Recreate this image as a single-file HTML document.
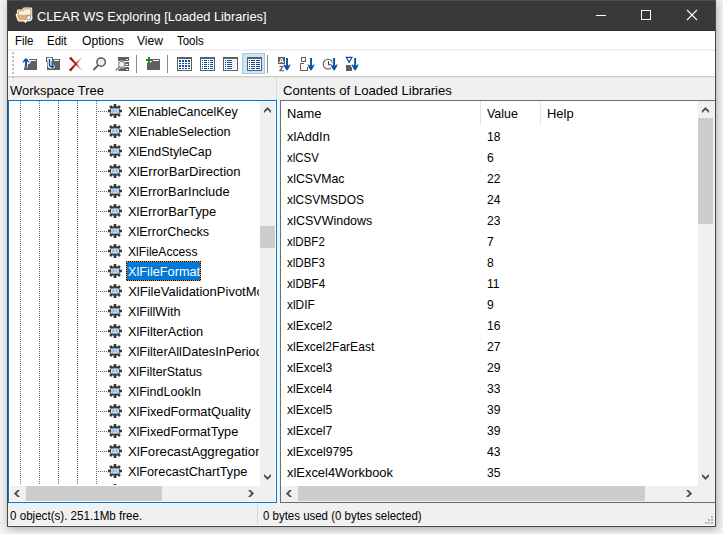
<!DOCTYPE html>
<html><head><meta charset="utf-8"><title>CLEAR WS Exploring [Loaded Libraries]</title>
<style>
html,body{margin:0;padding:0}
body{width:723px;height:534px;position:relative;overflow:hidden;background:#f2f2f2;font-family:'Liberation Sans',sans-serif;font-size:13px}
.t{position:absolute;white-space:pre;transform-origin:0 50%;font-family:'Liberation Sans',sans-serif;font-size:13px}
</style></head><body>
<div style="position:absolute;left:7px;top:0px;width:707px;height:525px;border:1px solid #474747;background:#f0f0f0;box-shadow:1px 2px 8px 0 rgba(0,0,0,.29)"></div>
<div style="position:absolute;left:8px;top:0px;width:707px;height:1px;background:#4d4d4d"></div>
<div style="position:absolute;left:8px;top:1px;width:707px;height:30px;background:#393939"></div>
<div style="position:absolute;left:8px;top:30px;width:707px;height:1px;background:#303030"></div>
<svg style="position:absolute;left:14px;top:6px" width="20" height="18" viewBox="0 0 20 18" >
<g stroke="#fff" stroke-width="2.6" stroke-linejoin="round" fill="#fff">
<path d="M4.2,4.8 H9 L10,2.9 H16.9 V9.5 H4.2 Z"/><path d="M3,8.9 H13 L12,14.2 H4.8 Z"/><circle cx="14.7" cy="11.6" r="2.5"/><path d="M12.9,13.8 L10.6,16.2" stroke-width="2.4"/>
</g>
<path d="M4.2,4.8 H9 L10,2.9 H16.9 V9.5 H4.2 Z" fill="#f0f0f5" stroke="#dcb067" stroke-width="1.3" stroke-linejoin="round"/>
<path d="M3,8.9 H13.4 L12.4,14.3 H4.7 Z" fill="#dcb067"/>
<path d="M13,13.6 L10.6,16.2" stroke="#e8e8e8" stroke-width="1.3"/>
<circle cx="14.7" cy="11.6" r="2.1" fill="#fff" stroke="#8c8c8c" stroke-width="1"/>
</svg>
<div class="t" style="left:37.2px;top:7px;line-height:20px;height:20px;color:#fff;transform:scaleX(0.9833);">CLEAR WS Exploring [Loaded Libraries]</div>
<svg style="position:absolute;left:590px;top:5px" width="115" height="20" viewBox="0 0 115 20" >
<g stroke="#fff" stroke-width="1" fill="none">
<path d="M6,10.5 H16" shape-rendering="crispEdges"/>
<rect x="51.5" y="5.5" width="9" height="9" shape-rendering="crispEdges"/>
<path d="M97,5 L107,15 M107,5 L97,15" stroke-width="1.1"/>
</g></svg>
<div style="position:absolute;left:8px;top:31px;width:707px;height:18px;background:#fff"></div>
<div class="t" style="left:15px;top:31px;line-height:20px;height:20px;color:#000;transform:scaleX(0.8829);">File</div>
<div class="t" style="left:47px;top:31px;line-height:20px;height:20px;color:#000;transform:scaleX(0.8837);">Edit</div>
<div class="t" style="left:81.5px;top:31px;line-height:20px;height:20px;color:#000;transform:scaleX(0.9350);">Options</div>
<div class="t" style="left:137px;top:31px;line-height:20px;height:20px;color:#000;transform:scaleX(0.9266);">View</div>
<div class="t" style="left:176.5px;top:31px;line-height:20px;height:20px;color:#000;transform:scaleX(0.8828);">Tools</div>
<div style="position:absolute;left:8px;top:49px;width:707px;height:2px;background:#f0f0f0"></div>
<div style="position:absolute;left:8px;top:51px;width:707px;height:25px;background:#fff"></div>
<div style="position:absolute;left:8px;top:76px;width:707px;height:1px;background:#cdcdcd"></div>
<div style="position:absolute;left:8px;top:77px;width:707px;height:1px;background:#e2e2e2"></div>
<svg style="position:absolute;left:12px;top:52px" width="2" height="26" viewBox="0 0 2 26" shape-rendering="crispEdges"><rect x="0" y="0" width="2" height="2" fill="#c9c9c9"/><rect x="1" y="1" width="1" height="1" fill="#a8a8a8"/><rect x="0" y="4" width="2" height="2" fill="#c9c9c9"/><rect x="1" y="5" width="1" height="1" fill="#a8a8a8"/><rect x="0" y="8" width="2" height="2" fill="#c9c9c9"/><rect x="1" y="9" width="1" height="1" fill="#a8a8a8"/><rect x="0" y="12" width="2" height="2" fill="#c9c9c9"/><rect x="1" y="13" width="1" height="1" fill="#a8a8a8"/><rect x="0" y="16" width="2" height="2" fill="#c9c9c9"/><rect x="1" y="17" width="1" height="1" fill="#a8a8a8"/><rect x="0" y="20" width="2" height="2" fill="#c9c9c9"/><rect x="1" y="21" width="1" height="1" fill="#a8a8a8"/><rect x="0" y="24" width="2" height="2" fill="#c9c9c9"/><rect x="1" y="25" width="1" height="1" fill="#a8a8a8"/></svg>
<svg style="position:absolute;left:0;top:0" width="723" height="534" viewBox="0 0 723 534">
<rect x="136" y="55" width="1" height="18" fill="#8a8a8a" shape-rendering="crispEdges"/>
<rect x="167" y="55" width="1" height="18" fill="#8a8a8a" shape-rendering="crispEdges"/>
<rect x="267" y="55" width="1" height="18" fill="#8a8a8a" shape-rendering="crispEdges"/>
<rect x="242.5" y="53.5" width="22" height="20" fill="#cce4f7" stroke="#99c9ef" stroke-width="1" shape-rendering="crispEdges"/>
<g shape-rendering="crispEdges"><rect x="24" y="59" width="13" height="11" fill="#5f5f5f"/><rect x="30" y="60" width="6" height="1" fill="#fff"/></g>
<path d="M26,66.4 V60 M23.2,62 Q24.5,60 26,58.6 Q27.5,60 28.8,62" fill="none" stroke="#fff" stroke-width="3.6" stroke-linejoin="round" stroke-linecap="round"/>
<path d="M26,67.8 V60" stroke="#0a50a0" stroke-width="1.9" fill="none"/>
<path d="M22.7,63.2 C22.7,60.6 24.5,59.4 26,57.9 C27.5,59.4 29.3,60.6 29.3,63.2 C28.5,62.2 27.7,61.7 26.9,61.5 L25.1,61.5 C24.3,61.7 23.5,62.2 22.7,63.2 Z" fill="#0a50a0"/>
<g shape-rendering="crispEdges"><rect x="47" y="59" width="13" height="11" fill="#5f5f5f"/><rect x="54" y="60" width="5" height="1" fill="#fff"/><rect x="46.5" y="57.5" width="6" height="4" fill="#fff" stroke="#5f5f5f" stroke-width="1"/></g>
<path d="M49.5,59.5 V65 Q49.5,66.6 51,66.6 H53" fill="none" stroke="#fff" stroke-width="3.8" stroke-linecap="round" stroke-linejoin="round"/>
<path d="M49.5,59 V65 Q49.5,66.6 51,66.6 H52.4" fill="none" stroke="#0a50a0" stroke-width="1.5"/><path d="M51.6,64.1 L54.6,66.6 L51.6,69.1 Z" fill="#0a50a0"/>
<defs><linearGradient id="rx" x1="69" x2="83" y1="0" y2="0" gradientUnits="userSpaceOnUse"><stop offset="0" stop-color="#a51c00"/><stop offset=".5" stop-color="#a51c00"/><stop offset="1" stop-color="#a51c00" stop-opacity=".1"/></linearGradient></defs>
<path d="M69,58.5 L71,56.8 L82.4,70.4 L82.1,70.7 Z" fill="url(#rx)"/><path d="M68.9,69.8 L70.9,71.5 L82.2,57.3 L81.9,57 Z" fill="url(#rx)"/>
<circle cx="101.1" cy="62.1" r="4.2" fill="#f0f0f4" stroke="#5c5c5c" stroke-width="1.5"/><path d="M98,65.4 L93.4,70" stroke="#5c5c5c" stroke-width="1.9"/>
<g shape-rendering="crispEdges" fill="#5f5f5f"><rect x="118" y="57" width="11" height="4"/><rect x="118" y="62" width="11" height="4"/><rect x="118" y="67" width="11" height="4"/><g fill="#fff"><rect x="126" y="59" width="2" height="1"/><rect x="126" y="64" width="2" height="1"/><rect x="126" y="69" width="2" height="1"/></g></g>
<path d="M119.4,66.8 L115.6,70.6" stroke="#fff" stroke-width="3"/><circle cx="121.6" cy="64.4" r="3.9" fill="#fff"/><circle cx="121.6" cy="64.4" r="3.1" fill="#f2f2f4" stroke="#6a6a6a" stroke-width="1"/><path d="M119.5,66.7 L115.8,70.4" stroke="#6a6a6a" stroke-width="1.3"/>
<g shape-rendering="crispEdges"><rect x="147" y="59" width="13" height="11" fill="#5f5f5f"/><rect x="153" y="60" width="6" height="1" fill="#fff"/></g>
<path d="M149,57 V63 M146,60 H152" stroke="#fff" stroke-width="3.6" />
<path d="M149,57 V63 M146,60 H152" stroke="#1e8c1e" stroke-width="1.8" shape-rendering="crispEdges"/>
<g shape-rendering="crispEdges"><rect x="177" y="57" width="15" height="14" fill="#5f5f5f"/><rect x="178" y="59" width="13" height="11" fill="#fff"/><rect x="179" y="60" width="2" height="2" fill="#0a4a9f"/><rect x="179" y="63" width="2" height="1" fill="#0a4a9f"/><rect x="179" y="65" width="2" height="2" fill="#0a4a9f"/><rect x="179" y="68" width="2" height="1" fill="#0a4a9f"/><rect x="182" y="60" width="2" height="2" fill="#0a4a9f"/><rect x="182" y="63" width="2" height="1" fill="#0a4a9f"/><rect x="182" y="65" width="2" height="2" fill="#0a4a9f"/><rect x="182" y="68" width="2" height="1" fill="#0a4a9f"/><rect x="185" y="60" width="2" height="2" fill="#0a4a9f"/><rect x="185" y="63" width="2" height="1" fill="#0a4a9f"/><rect x="185" y="65" width="2" height="2" fill="#0a4a9f"/><rect x="185" y="68" width="2" height="1" fill="#0a4a9f"/><rect x="188" y="60" width="2" height="2" fill="#0a4a9f"/><rect x="188" y="63" width="2" height="1" fill="#0a4a9f"/><rect x="188" y="65" width="2" height="2" fill="#0a4a9f"/><rect x="188" y="68" width="2" height="1" fill="#0a4a9f"/><rect x="200" y="57" width="15" height="14" fill="#5f5f5f"/><rect x="201" y="59" width="13" height="11" fill="#fff"/><rect x="202" y="60" width="1" height="1" fill="#0a4a9f"/><rect x="204" y="60" width="3" height="1" fill="#0a4a9f"/><rect x="208" y="60" width="1" height="1" fill="#0a4a9f"/><rect x="210" y="60" width="3" height="1" fill="#0a4a9f"/><rect x="202" y="62" width="1" height="1" fill="#0a4a9f"/><rect x="204" y="62" width="3" height="1" fill="#0a4a9f"/><rect x="208" y="62" width="1" height="1" fill="#0a4a9f"/><rect x="210" y="62" width="3" height="1" fill="#0a4a9f"/><rect x="202" y="64" width="1" height="1" fill="#0a4a9f"/><rect x="204" y="64" width="3" height="1" fill="#0a4a9f"/><rect x="208" y="64" width="1" height="1" fill="#0a4a9f"/><rect x="210" y="64" width="3" height="1" fill="#0a4a9f"/><rect x="202" y="66" width="1" height="1" fill="#0a4a9f"/><rect x="204" y="66" width="3" height="1" fill="#0a4a9f"/><rect x="208" y="66" width="1" height="1" fill="#0a4a9f"/><rect x="210" y="66" width="3" height="1" fill="#0a4a9f"/><rect x="202" y="68" width="1" height="1" fill="#0a4a9f"/><rect x="204" y="68" width="3" height="1" fill="#0a4a9f"/><rect x="208" y="68" width="1" height="1" fill="#0a4a9f"/><rect x="210" y="68" width="3" height="1" fill="#0a4a9f"/><rect x="223" y="57" width="15" height="14" fill="#5f5f5f"/><rect x="224" y="59" width="13" height="11" fill="#fff"/><rect x="232" y="60" width="4" height="9" fill="#f0f0f0"/><rect x="225" y="60" width="1" height="1" fill="#0a4a9f"/><rect x="227" y="60" width="5" height="1" fill="#0a4a9f"/><rect x="225" y="62" width="1" height="1" fill="#0a4a9f"/><rect x="227" y="62" width="5" height="1" fill="#0a4a9f"/><rect x="225" y="64" width="1" height="1" fill="#0a4a9f"/><rect x="227" y="64" width="5" height="1" fill="#0a4a9f"/><rect x="225" y="66" width="1" height="1" fill="#0a4a9f"/><rect x="227" y="66" width="5" height="1" fill="#0a4a9f"/><rect x="225" y="68" width="1" height="1" fill="#0a4a9f"/><rect x="227" y="68" width="5" height="1" fill="#0a4a9f"/><rect x="247" y="57" width="15" height="14" fill="#5f5f5f"/><rect x="248" y="59" width="13" height="11" fill="#fff"/><rect x="249" y="60" width="1" height="1" fill="#0a4a9f"/><rect x="251" y="60" width="4" height="1" fill="#0a4a9f"/><rect x="256" y="60" width="4" height="1" fill="#0a4a9f"/><rect x="249" y="62" width="1" height="1" fill="#0a4a9f"/><rect x="251" y="62" width="4" height="1" fill="#0a4a9f"/><rect x="256" y="62" width="4" height="1" fill="#0a4a9f"/><rect x="249" y="64" width="1" height="1" fill="#0a4a9f"/><rect x="251" y="64" width="4" height="1" fill="#0a4a9f"/><rect x="256" y="64" width="4" height="1" fill="#0a4a9f"/><rect x="249" y="66" width="1" height="1" fill="#0a4a9f"/><rect x="251" y="66" width="4" height="1" fill="#0a4a9f"/><rect x="256" y="66" width="4" height="1" fill="#0a4a9f"/><rect x="249" y="68" width="1" height="1" fill="#0a4a9f"/><rect x="251" y="68" width="4" height="1" fill="#0a4a9f"/><rect x="256" y="68" width="4" height="1" fill="#0a4a9f"/></g>
<rect x="278" y="57" width="7" height="7" fill="#5f5f5f" shape-rendering="crispEdges"/>
<path d="M287,58 V68" stroke="#0a50a0" stroke-width="1.9" fill="none"/><path d="M283.6,63.8 C283.6,66.6 285.5,68.8 287,70.7 C288.5,68.8 290.4,66.6 290.4,63.8 C289.6,64.9 288.8,65.5 287.9,65.7 L286.1,65.7 C285.2,65.5 284.4,64.9 283.6,63.8 Z" fill="#0a50a0"/>
<g shape-rendering="crispEdges" fill="none" stroke="#5f5f5f" stroke-width="1"><rect x="301.5" y="57.5" width="4" height="4"/><path d="M304,63.5 H300.5 V70.5 H307.5 V67"/></g>
<path d="M311,58 V68" stroke="#0a50a0" stroke-width="1.9" fill="none"/><path d="M307.6,63.8 C307.6,66.6 309.5,68.8 311,70.7 C312.5,68.8 314.4,66.6 314.4,63.8 C313.6,64.9 312.8,65.5 311.9,65.7 L310.1,65.7 C309.2,65.5 308.4,64.9 307.6,63.8 Z" fill="#0a50a0"/>
<circle cx="328.1" cy="64.2" r="4.9" fill="#f4f4f4" stroke="#5c5c5c" stroke-width="1.1"/><path d="M328.5,61.3 V64.7 H330.6" fill="none" stroke="#333" stroke-width="1"/>
<path d="M334.1,58 V68 M331,65 L334.1,70 L337.2,65" fill="none" stroke="#fff" stroke-width="3.4" stroke-linejoin="round"/>
<path d="M334.1,58 V68" stroke="#0a50a0" stroke-width="1.9" fill="none"/><path d="M330.70000000000005,63.8 C330.70000000000005,66.6 332.6,68.8 334.1,70.7 C335.6,68.8 337.5,66.6 337.5,63.8 C336.70000000000005,64.9 335.90000000000003,65.5 335.0,65.7 L333.20000000000005,65.7 C332.3,65.5 331.5,64.9 330.70000000000005,63.8 Z" fill="#0a50a0"/>
<path d="M346.3,57.4 H352 L349.15,62.4 Z" fill="#fff" stroke="#0a4a9f" stroke-width="1.2"/><rect x="346" y="65" width="6" height="6" fill="#5f5f5f" shape-rendering="crispEdges"/>
<path d="M355.1,62 V68 M352,65 L355.1,70 L358.2,65" fill="none" stroke="#fff" stroke-width="3.2" stroke-linejoin="round"/>
<path d="M355.1,58 V68" stroke="#0a50a0" stroke-width="1.9" fill="none"/><path d="M351.70000000000005,63.8 C351.70000000000005,66.6 353.6,68.8 355.1,70.7 C356.6,68.8 358.5,66.6 358.5,63.8 C357.70000000000005,64.9 356.90000000000003,65.5 356.0,65.7 L354.20000000000005,65.7 C353.3,65.5 352.5,64.9 351.70000000000005,63.8 Z" fill="#0a50a0"/>
</svg>
<svg style="position:absolute;left:276px;top:55px;will-change:transform" width="12" height="18" viewBox="276 55 12 18"><text x="281.5" y="63" font-family="Liberation Sans,sans-serif" font-size="7" font-weight="bold" fill="#fff" text-anchor="middle">A</text><text x="281.6" y="70.8" font-family="Liberation Sans,sans-serif" font-size="7.4" font-weight="bold" fill="#5f5f5f" stroke="#5f5f5f" stroke-width=".3" text-anchor="middle">Z</text></svg>
<div style="position:absolute;left:276px;top:78px;width:1px;height:22px;background:#dadada"></div>
<div class="t" style="left:10px;top:81px;line-height:20px;height:20px;color:#000;transform:scaleX(0.9945);">Workspace Tree</div>
<div class="t" style="left:283px;top:81px;line-height:20px;height:20px;color:#000;transform:scaleX(1.0117);">Contents of Loaded Libraries</div>
<div style="position:absolute;left:8px;top:100px;width:267px;height:401px;border:1px solid #0078d7;background:#fff"></div>
<div style="position:absolute;left:9px;top:101px;width:250px;height:384px;overflow:hidden;background:#fff"><svg style="position:absolute;left:0;top:0" width="251" height="384" shape-rendering="crispEdges"><line x1="11.5" y1="0" x2="11.5" y2="384" stroke="#666" stroke-width="1" stroke-dasharray="1 1" stroke-dashoffset="0"/><line x1="30.5" y1="0" x2="30.5" y2="384" stroke="#666" stroke-width="1" stroke-dasharray="1 1" stroke-dashoffset="0"/><line x1="49.5" y1="0" x2="49.5" y2="384" stroke="#666" stroke-width="1" stroke-dasharray="1 1" stroke-dashoffset="0"/><line x1="68.5" y1="0" x2="68.5" y2="384" stroke="#666" stroke-width="1" stroke-dasharray="1 1" stroke-dashoffset="0"/><line x1="87.5" y1="0" x2="87.5" y2="384" stroke="#666" stroke-width="1" stroke-dasharray="1 1" stroke-dashoffset="0"/><line x1="89" y1="10.5" x2="98" y2="10.5" stroke="#666" stroke-width="1" stroke-dasharray="1 1" stroke-dashoffset="0"/><line x1="89" y1="30.5" x2="98" y2="30.5" stroke="#666" stroke-width="1" stroke-dasharray="1 1" stroke-dashoffset="0"/><line x1="89" y1="50.5" x2="98" y2="50.5" stroke="#666" stroke-width="1" stroke-dasharray="1 1" stroke-dashoffset="0"/><line x1="89" y1="70.5" x2="98" y2="70.5" stroke="#666" stroke-width="1" stroke-dasharray="1 1" stroke-dashoffset="0"/><line x1="89" y1="90.5" x2="98" y2="90.5" stroke="#666" stroke-width="1" stroke-dasharray="1 1" stroke-dashoffset="0"/><line x1="89" y1="110.5" x2="98" y2="110.5" stroke="#666" stroke-width="1" stroke-dasharray="1 1" stroke-dashoffset="0"/><line x1="89" y1="130.5" x2="98" y2="130.5" stroke="#666" stroke-width="1" stroke-dasharray="1 1" stroke-dashoffset="0"/><line x1="89" y1="150.5" x2="98" y2="150.5" stroke="#666" stroke-width="1" stroke-dasharray="1 1" stroke-dashoffset="0"/><line x1="89" y1="170.5" x2="98" y2="170.5" stroke="#666" stroke-width="1" stroke-dasharray="1 1" stroke-dashoffset="0"/><line x1="89" y1="190.5" x2="98" y2="190.5" stroke="#666" stroke-width="1" stroke-dasharray="1 1" stroke-dashoffset="0"/><line x1="89" y1="210.5" x2="98" y2="210.5" stroke="#666" stroke-width="1" stroke-dasharray="1 1" stroke-dashoffset="0"/><line x1="89" y1="230.5" x2="98" y2="230.5" stroke="#666" stroke-width="1" stroke-dasharray="1 1" stroke-dashoffset="0"/><line x1="89" y1="250.5" x2="98" y2="250.5" stroke="#666" stroke-width="1" stroke-dasharray="1 1" stroke-dashoffset="0"/><line x1="89" y1="270.5" x2="98" y2="270.5" stroke="#666" stroke-width="1" stroke-dasharray="1 1" stroke-dashoffset="0"/><line x1="89" y1="290.5" x2="98" y2="290.5" stroke="#666" stroke-width="1" stroke-dasharray="1 1" stroke-dashoffset="0"/><line x1="89" y1="310.5" x2="98" y2="310.5" stroke="#666" stroke-width="1" stroke-dasharray="1 1" stroke-dashoffset="0"/><line x1="89" y1="330.5" x2="98" y2="330.5" stroke="#666" stroke-width="1" stroke-dasharray="1 1" stroke-dashoffset="0"/><line x1="89" y1="350.5" x2="98" y2="350.5" stroke="#666" stroke-width="1" stroke-dasharray="1 1" stroke-dashoffset="0"/><line x1="89" y1="370.5" x2="98" y2="370.5" stroke="#666" stroke-width="1" stroke-dasharray="1 1" stroke-dashoffset="0"/><line x1="89" y1="390.5" x2="98" y2="390.5" stroke="#666" stroke-width="1" stroke-dasharray="1 1" stroke-dashoffset="0"/></svg><svg style="position:absolute;left:99px;top:3px" width="14" height="14" viewBox="0 0 14 14"><g transform="translate(7,7)"><g fill="#3a3a3a"><rect x="-1.35" y="-7" width="2.7" height="4" transform="rotate(0)"/><rect x="-1.35" y="-7" width="2.7" height="4" transform="rotate(45)"/><rect x="-1.35" y="-7" width="2.7" height="4" transform="rotate(90)"/><rect x="-1.35" y="-7" width="2.7" height="4" transform="rotate(135)"/><rect x="-1.35" y="-7" width="2.7" height="4" transform="rotate(180)"/><rect x="-1.35" y="-7" width="2.7" height="4" transform="rotate(225)"/><rect x="-1.35" y="-7" width="2.7" height="4" transform="rotate(270)"/><rect x="-1.35" y="-7" width="2.7" height="4" transform="rotate(315)"/><circle r="5.1"/></g>
<rect x="-4.1" y="-2.6" width="8.2" height="5.2" rx="1.4" fill="#fff"/>
<g fill="none" stroke="#4d94dc" stroke-width=".85"><ellipse cx="-2.35" cy="0" rx=".85" ry="1.55"/><path d="M-.1,-1.7 V1.7"/><path d="M1.5,-1.7 V.7 Q1.5,1.6 2.3,1.6 Q3.1,1.6 3.1,.7 V-1.7"/></g></g></svg><div class="t" style="left:119.2px;top:1px;line-height:20px;height:20px;color:#000;transform:scaleX(0.9538)">XlEnableCancelKey</div><svg style="position:absolute;left:99px;top:23px" width="14" height="14" viewBox="0 0 14 14"><g transform="translate(7,7)"><g fill="#3a3a3a"><rect x="-1.35" y="-7" width="2.7" height="4" transform="rotate(0)"/><rect x="-1.35" y="-7" width="2.7" height="4" transform="rotate(45)"/><rect x="-1.35" y="-7" width="2.7" height="4" transform="rotate(90)"/><rect x="-1.35" y="-7" width="2.7" height="4" transform="rotate(135)"/><rect x="-1.35" y="-7" width="2.7" height="4" transform="rotate(180)"/><rect x="-1.35" y="-7" width="2.7" height="4" transform="rotate(225)"/><rect x="-1.35" y="-7" width="2.7" height="4" transform="rotate(270)"/><rect x="-1.35" y="-7" width="2.7" height="4" transform="rotate(315)"/><circle r="5.1"/></g>
<rect x="-4.1" y="-2.6" width="8.2" height="5.2" rx="1.4" fill="#fff"/>
<g fill="none" stroke="#4d94dc" stroke-width=".85"><ellipse cx="-2.35" cy="0" rx=".85" ry="1.55"/><path d="M-.1,-1.7 V1.7"/><path d="M1.5,-1.7 V.7 Q1.5,1.6 2.3,1.6 Q3.1,1.6 3.1,.7 V-1.7"/></g></g></svg><div class="t" style="left:119.2px;top:21px;line-height:20px;height:20px;color:#000;transform:scaleX(0.9722)">XlEnableSelection</div><svg style="position:absolute;left:99px;top:43px" width="14" height="14" viewBox="0 0 14 14"><g transform="translate(7,7)"><g fill="#3a3a3a"><rect x="-1.35" y="-7" width="2.7" height="4" transform="rotate(0)"/><rect x="-1.35" y="-7" width="2.7" height="4" transform="rotate(45)"/><rect x="-1.35" y="-7" width="2.7" height="4" transform="rotate(90)"/><rect x="-1.35" y="-7" width="2.7" height="4" transform="rotate(135)"/><rect x="-1.35" y="-7" width="2.7" height="4" transform="rotate(180)"/><rect x="-1.35" y="-7" width="2.7" height="4" transform="rotate(225)"/><rect x="-1.35" y="-7" width="2.7" height="4" transform="rotate(270)"/><rect x="-1.35" y="-7" width="2.7" height="4" transform="rotate(315)"/><circle r="5.1"/></g>
<rect x="-4.1" y="-2.6" width="8.2" height="5.2" rx="1.4" fill="#fff"/>
<g fill="none" stroke="#4d94dc" stroke-width=".85"><ellipse cx="-2.35" cy="0" rx=".85" ry="1.55"/><path d="M-.1,-1.7 V1.7"/><path d="M1.5,-1.7 V.7 Q1.5,1.6 2.3,1.6 Q3.1,1.6 3.1,.7 V-1.7"/></g></g></svg><div class="t" style="left:119.2px;top:41px;line-height:20px;height:20px;color:#000;transform:scaleX(0.9559)">XlEndStyleCap</div><svg style="position:absolute;left:99px;top:63px" width="14" height="14" viewBox="0 0 14 14"><g transform="translate(7,7)"><g fill="#3a3a3a"><rect x="-1.35" y="-7" width="2.7" height="4" transform="rotate(0)"/><rect x="-1.35" y="-7" width="2.7" height="4" transform="rotate(45)"/><rect x="-1.35" y="-7" width="2.7" height="4" transform="rotate(90)"/><rect x="-1.35" y="-7" width="2.7" height="4" transform="rotate(135)"/><rect x="-1.35" y="-7" width="2.7" height="4" transform="rotate(180)"/><rect x="-1.35" y="-7" width="2.7" height="4" transform="rotate(225)"/><rect x="-1.35" y="-7" width="2.7" height="4" transform="rotate(270)"/><rect x="-1.35" y="-7" width="2.7" height="4" transform="rotate(315)"/><circle r="5.1"/></g>
<rect x="-4.1" y="-2.6" width="8.2" height="5.2" rx="1.4" fill="#fff"/>
<g fill="none" stroke="#4d94dc" stroke-width=".85"><ellipse cx="-2.35" cy="0" rx=".85" ry="1.55"/><path d="M-.1,-1.7 V1.7"/><path d="M1.5,-1.7 V.7 Q1.5,1.6 2.3,1.6 Q3.1,1.6 3.1,.7 V-1.7"/></g></g></svg><div class="t" style="left:119.2px;top:61px;line-height:20px;height:20px;color:#000;transform:scaleX(1.0055)">XlErrorBarDirection</div><svg style="position:absolute;left:99px;top:83px" width="14" height="14" viewBox="0 0 14 14"><g transform="translate(7,7)"><g fill="#3a3a3a"><rect x="-1.35" y="-7" width="2.7" height="4" transform="rotate(0)"/><rect x="-1.35" y="-7" width="2.7" height="4" transform="rotate(45)"/><rect x="-1.35" y="-7" width="2.7" height="4" transform="rotate(90)"/><rect x="-1.35" y="-7" width="2.7" height="4" transform="rotate(135)"/><rect x="-1.35" y="-7" width="2.7" height="4" transform="rotate(180)"/><rect x="-1.35" y="-7" width="2.7" height="4" transform="rotate(225)"/><rect x="-1.35" y="-7" width="2.7" height="4" transform="rotate(270)"/><rect x="-1.35" y="-7" width="2.7" height="4" transform="rotate(315)"/><circle r="5.1"/></g>
<rect x="-4.1" y="-2.6" width="8.2" height="5.2" rx="1.4" fill="#fff"/>
<g fill="none" stroke="#4d94dc" stroke-width=".85"><ellipse cx="-2.35" cy="0" rx=".85" ry="1.55"/><path d="M-.1,-1.7 V1.7"/><path d="M1.5,-1.7 V.7 Q1.5,1.6 2.3,1.6 Q3.1,1.6 3.1,.7 V-1.7"/></g></g></svg><div class="t" style="left:119.2px;top:81px;line-height:20px;height:20px;color:#000;transform:scaleX(0.9902)">XlErrorBarInclude</div><svg style="position:absolute;left:99px;top:103px" width="14" height="14" viewBox="0 0 14 14"><g transform="translate(7,7)"><g fill="#3a3a3a"><rect x="-1.35" y="-7" width="2.7" height="4" transform="rotate(0)"/><rect x="-1.35" y="-7" width="2.7" height="4" transform="rotate(45)"/><rect x="-1.35" y="-7" width="2.7" height="4" transform="rotate(90)"/><rect x="-1.35" y="-7" width="2.7" height="4" transform="rotate(135)"/><rect x="-1.35" y="-7" width="2.7" height="4" transform="rotate(180)"/><rect x="-1.35" y="-7" width="2.7" height="4" transform="rotate(225)"/><rect x="-1.35" y="-7" width="2.7" height="4" transform="rotate(270)"/><rect x="-1.35" y="-7" width="2.7" height="4" transform="rotate(315)"/><circle r="5.1"/></g>
<rect x="-4.1" y="-2.6" width="8.2" height="5.2" rx="1.4" fill="#fff"/>
<g fill="none" stroke="#4d94dc" stroke-width=".85"><ellipse cx="-2.35" cy="0" rx=".85" ry="1.55"/><path d="M-.1,-1.7 V1.7"/><path d="M1.5,-1.7 V.7 Q1.5,1.6 2.3,1.6 Q3.1,1.6 3.1,.7 V-1.7"/></g></g></svg><div class="t" style="left:119.2px;top:101px;line-height:20px;height:20px;color:#000;transform:scaleX(0.9924)">XlErrorBarType</div><svg style="position:absolute;left:99px;top:123px" width="14" height="14" viewBox="0 0 14 14"><g transform="translate(7,7)"><g fill="#3a3a3a"><rect x="-1.35" y="-7" width="2.7" height="4" transform="rotate(0)"/><rect x="-1.35" y="-7" width="2.7" height="4" transform="rotate(45)"/><rect x="-1.35" y="-7" width="2.7" height="4" transform="rotate(90)"/><rect x="-1.35" y="-7" width="2.7" height="4" transform="rotate(135)"/><rect x="-1.35" y="-7" width="2.7" height="4" transform="rotate(180)"/><rect x="-1.35" y="-7" width="2.7" height="4" transform="rotate(225)"/><rect x="-1.35" y="-7" width="2.7" height="4" transform="rotate(270)"/><rect x="-1.35" y="-7" width="2.7" height="4" transform="rotate(315)"/><circle r="5.1"/></g>
<rect x="-4.1" y="-2.6" width="8.2" height="5.2" rx="1.4" fill="#fff"/>
<g fill="none" stroke="#4d94dc" stroke-width=".85"><ellipse cx="-2.35" cy="0" rx=".85" ry="1.55"/><path d="M-.1,-1.7 V1.7"/><path d="M1.5,-1.7 V.7 Q1.5,1.6 2.3,1.6 Q3.1,1.6 3.1,.7 V-1.7"/></g></g></svg><div class="t" style="left:119.2px;top:121px;line-height:20px;height:20px;color:#000;transform:scaleX(0.9678)">XlErrorChecks</div><svg style="position:absolute;left:99px;top:143px" width="14" height="14" viewBox="0 0 14 14"><g transform="translate(7,7)"><g fill="#3a3a3a"><rect x="-1.35" y="-7" width="2.7" height="4" transform="rotate(0)"/><rect x="-1.35" y="-7" width="2.7" height="4" transform="rotate(45)"/><rect x="-1.35" y="-7" width="2.7" height="4" transform="rotate(90)"/><rect x="-1.35" y="-7" width="2.7" height="4" transform="rotate(135)"/><rect x="-1.35" y="-7" width="2.7" height="4" transform="rotate(180)"/><rect x="-1.35" y="-7" width="2.7" height="4" transform="rotate(225)"/><rect x="-1.35" y="-7" width="2.7" height="4" transform="rotate(270)"/><rect x="-1.35" y="-7" width="2.7" height="4" transform="rotate(315)"/><circle r="5.1"/></g>
<rect x="-4.1" y="-2.6" width="8.2" height="5.2" rx="1.4" fill="#fff"/>
<g fill="none" stroke="#4d94dc" stroke-width=".85"><ellipse cx="-2.35" cy="0" rx=".85" ry="1.55"/><path d="M-.1,-1.7 V1.7"/><path d="M1.5,-1.7 V.7 Q1.5,1.6 2.3,1.6 Q3.1,1.6 3.1,.7 V-1.7"/></g></g></svg><div class="t" style="left:119.2px;top:141px;line-height:20px;height:20px;color:#000;transform:scaleX(0.9339)">XlFileAccess</div><svg style="position:absolute;left:99px;top:163px" width="14" height="14" viewBox="0 0 14 14"><g transform="translate(7,7)"><g fill="#3a3a3a"><rect x="-1.35" y="-7" width="2.7" height="4" transform="rotate(0)"/><rect x="-1.35" y="-7" width="2.7" height="4" transform="rotate(45)"/><rect x="-1.35" y="-7" width="2.7" height="4" transform="rotate(90)"/><rect x="-1.35" y="-7" width="2.7" height="4" transform="rotate(135)"/><rect x="-1.35" y="-7" width="2.7" height="4" transform="rotate(180)"/><rect x="-1.35" y="-7" width="2.7" height="4" transform="rotate(225)"/><rect x="-1.35" y="-7" width="2.7" height="4" transform="rotate(270)"/><rect x="-1.35" y="-7" width="2.7" height="4" transform="rotate(315)"/><circle r="5.1"/></g>
<rect x="-4.1" y="-2.6" width="8.2" height="5.2" rx="1.4" fill="#fff"/>
<g fill="none" stroke="#4d94dc" stroke-width=".85"><ellipse cx="-2.35" cy="0" rx=".85" ry="1.55"/><path d="M-.1,-1.7 V1.7"/><path d="M1.5,-1.7 V.7 Q1.5,1.6 2.3,1.6 Q3.1,1.6 3.1,.7 V-1.7"/></g></g></svg><div style="position:absolute;left:117px;top:160px;width:75px;height:20px;background:#0078d7"></div><div style="position:absolute;left:117px;top:160px;width:75px;height:1px;background:repeating-linear-gradient(90deg,#000 0 1px,#ff8c1a 1px 2px)"></div><div style="position:absolute;left:117px;top:179px;width:75px;height:1px;background:repeating-linear-gradient(90deg,#ff8c1a 0 1px,#000 1px 2px)"></div><div style="position:absolute;left:117px;top:160px;width:1px;height:20px;background:repeating-linear-gradient(180deg,#000 0 1px,#ff8c1a 1px 2px)"></div><div style="position:absolute;left:191px;top:160px;width:1px;height:20px;background:repeating-linear-gradient(180deg,#000 0 1px,#ff8c1a 1px 2px)"></div><div class="t" style="left:119.2px;top:161px;line-height:20px;height:20px;color:#fff;transform:scaleX(0.9785)">XlFileFormat</div><svg style="position:absolute;left:99px;top:183px" width="14" height="14" viewBox="0 0 14 14"><g transform="translate(7,7)"><g fill="#3a3a3a"><rect x="-1.35" y="-7" width="2.7" height="4" transform="rotate(0)"/><rect x="-1.35" y="-7" width="2.7" height="4" transform="rotate(45)"/><rect x="-1.35" y="-7" width="2.7" height="4" transform="rotate(90)"/><rect x="-1.35" y="-7" width="2.7" height="4" transform="rotate(135)"/><rect x="-1.35" y="-7" width="2.7" height="4" transform="rotate(180)"/><rect x="-1.35" y="-7" width="2.7" height="4" transform="rotate(225)"/><rect x="-1.35" y="-7" width="2.7" height="4" transform="rotate(270)"/><rect x="-1.35" y="-7" width="2.7" height="4" transform="rotate(315)"/><circle r="5.1"/></g>
<rect x="-4.1" y="-2.6" width="8.2" height="5.2" rx="1.4" fill="#fff"/>
<g fill="none" stroke="#4d94dc" stroke-width=".85"><ellipse cx="-2.35" cy="0" rx=".85" ry="1.55"/><path d="M-.1,-1.7 V1.7"/><path d="M1.5,-1.7 V.7 Q1.5,1.6 2.3,1.6 Q3.1,1.6 3.1,.7 V-1.7"/></g></g></svg><div class="t" style="left:119.2px;top:181px;line-height:20px;height:20px;color:#000;transform:scaleX(1.0000)">XlFileValidationPivotMode</div><svg style="position:absolute;left:99px;top:203px" width="14" height="14" viewBox="0 0 14 14"><g transform="translate(7,7)"><g fill="#3a3a3a"><rect x="-1.35" y="-7" width="2.7" height="4" transform="rotate(0)"/><rect x="-1.35" y="-7" width="2.7" height="4" transform="rotate(45)"/><rect x="-1.35" y="-7" width="2.7" height="4" transform="rotate(90)"/><rect x="-1.35" y="-7" width="2.7" height="4" transform="rotate(135)"/><rect x="-1.35" y="-7" width="2.7" height="4" transform="rotate(180)"/><rect x="-1.35" y="-7" width="2.7" height="4" transform="rotate(225)"/><rect x="-1.35" y="-7" width="2.7" height="4" transform="rotate(270)"/><rect x="-1.35" y="-7" width="2.7" height="4" transform="rotate(315)"/><circle r="5.1"/></g>
<rect x="-4.1" y="-2.6" width="8.2" height="5.2" rx="1.4" fill="#fff"/>
<g fill="none" stroke="#4d94dc" stroke-width=".85"><ellipse cx="-2.35" cy="0" rx=".85" ry="1.55"/><path d="M-.1,-1.7 V1.7"/><path d="M1.5,-1.7 V.7 Q1.5,1.6 2.3,1.6 Q3.1,1.6 3.1,.7 V-1.7"/></g></g></svg><div class="t" style="left:119.2px;top:201px;line-height:20px;height:20px;color:#000;transform:scaleX(0.9691)">XlFillWith</div><svg style="position:absolute;left:99px;top:223px" width="14" height="14" viewBox="0 0 14 14"><g transform="translate(7,7)"><g fill="#3a3a3a"><rect x="-1.35" y="-7" width="2.7" height="4" transform="rotate(0)"/><rect x="-1.35" y="-7" width="2.7" height="4" transform="rotate(45)"/><rect x="-1.35" y="-7" width="2.7" height="4" transform="rotate(90)"/><rect x="-1.35" y="-7" width="2.7" height="4" transform="rotate(135)"/><rect x="-1.35" y="-7" width="2.7" height="4" transform="rotate(180)"/><rect x="-1.35" y="-7" width="2.7" height="4" transform="rotate(225)"/><rect x="-1.35" y="-7" width="2.7" height="4" transform="rotate(270)"/><rect x="-1.35" y="-7" width="2.7" height="4" transform="rotate(315)"/><circle r="5.1"/></g>
<rect x="-4.1" y="-2.6" width="8.2" height="5.2" rx="1.4" fill="#fff"/>
<g fill="none" stroke="#4d94dc" stroke-width=".85"><ellipse cx="-2.35" cy="0" rx=".85" ry="1.55"/><path d="M-.1,-1.7 V1.7"/><path d="M1.5,-1.7 V.7 Q1.5,1.6 2.3,1.6 Q3.1,1.6 3.1,.7 V-1.7"/></g></g></svg><div class="t" style="left:119.2px;top:221px;line-height:20px;height:20px;color:#000;transform:scaleX(0.9807)">XlFilterAction</div><svg style="position:absolute;left:99px;top:243px" width="14" height="14" viewBox="0 0 14 14"><g transform="translate(7,7)"><g fill="#3a3a3a"><rect x="-1.35" y="-7" width="2.7" height="4" transform="rotate(0)"/><rect x="-1.35" y="-7" width="2.7" height="4" transform="rotate(45)"/><rect x="-1.35" y="-7" width="2.7" height="4" transform="rotate(90)"/><rect x="-1.35" y="-7" width="2.7" height="4" transform="rotate(135)"/><rect x="-1.35" y="-7" width="2.7" height="4" transform="rotate(180)"/><rect x="-1.35" y="-7" width="2.7" height="4" transform="rotate(225)"/><rect x="-1.35" y="-7" width="2.7" height="4" transform="rotate(270)"/><rect x="-1.35" y="-7" width="2.7" height="4" transform="rotate(315)"/><circle r="5.1"/></g>
<rect x="-4.1" y="-2.6" width="8.2" height="5.2" rx="1.4" fill="#fff"/>
<g fill="none" stroke="#4d94dc" stroke-width=".85"><ellipse cx="-2.35" cy="0" rx=".85" ry="1.55"/><path d="M-.1,-1.7 V1.7"/><path d="M1.5,-1.7 V.7 Q1.5,1.6 2.3,1.6 Q3.1,1.6 3.1,.7 V-1.7"/></g></g></svg><div class="t" style="left:119.2px;top:241px;line-height:20px;height:20px;color:#000;transform:scaleX(0.9820)">XlFilterAllDatesInPeriod</div><svg style="position:absolute;left:99px;top:263px" width="14" height="14" viewBox="0 0 14 14"><g transform="translate(7,7)"><g fill="#3a3a3a"><rect x="-1.35" y="-7" width="2.7" height="4" transform="rotate(0)"/><rect x="-1.35" y="-7" width="2.7" height="4" transform="rotate(45)"/><rect x="-1.35" y="-7" width="2.7" height="4" transform="rotate(90)"/><rect x="-1.35" y="-7" width="2.7" height="4" transform="rotate(135)"/><rect x="-1.35" y="-7" width="2.7" height="4" transform="rotate(180)"/><rect x="-1.35" y="-7" width="2.7" height="4" transform="rotate(225)"/><rect x="-1.35" y="-7" width="2.7" height="4" transform="rotate(270)"/><rect x="-1.35" y="-7" width="2.7" height="4" transform="rotate(315)"/><circle r="5.1"/></g>
<rect x="-4.1" y="-2.6" width="8.2" height="5.2" rx="1.4" fill="#fff"/>
<g fill="none" stroke="#4d94dc" stroke-width=".85"><ellipse cx="-2.35" cy="0" rx=".85" ry="1.55"/><path d="M-.1,-1.7 V1.7"/><path d="M1.5,-1.7 V.7 Q1.5,1.6 2.3,1.6 Q3.1,1.6 3.1,.7 V-1.7"/></g></g></svg><div class="t" style="left:119.2px;top:261px;line-height:20px;height:20px;color:#000;transform:scaleX(0.9584)">XlFilterStatus</div><svg style="position:absolute;left:99px;top:283px" width="14" height="14" viewBox="0 0 14 14"><g transform="translate(7,7)"><g fill="#3a3a3a"><rect x="-1.35" y="-7" width="2.7" height="4" transform="rotate(0)"/><rect x="-1.35" y="-7" width="2.7" height="4" transform="rotate(45)"/><rect x="-1.35" y="-7" width="2.7" height="4" transform="rotate(90)"/><rect x="-1.35" y="-7" width="2.7" height="4" transform="rotate(135)"/><rect x="-1.35" y="-7" width="2.7" height="4" transform="rotate(180)"/><rect x="-1.35" y="-7" width="2.7" height="4" transform="rotate(225)"/><rect x="-1.35" y="-7" width="2.7" height="4" transform="rotate(270)"/><rect x="-1.35" y="-7" width="2.7" height="4" transform="rotate(315)"/><circle r="5.1"/></g>
<rect x="-4.1" y="-2.6" width="8.2" height="5.2" rx="1.4" fill="#fff"/>
<g fill="none" stroke="#4d94dc" stroke-width=".85"><ellipse cx="-2.35" cy="0" rx=".85" ry="1.55"/><path d="M-.1,-1.7 V1.7"/><path d="M1.5,-1.7 V.7 Q1.5,1.6 2.3,1.6 Q3.1,1.6 3.1,.7 V-1.7"/></g></g></svg><div class="t" style="left:119.2px;top:281px;line-height:20px;height:20px;color:#000;transform:scaleX(0.9632)">XlFindLookIn</div><svg style="position:absolute;left:99px;top:303px" width="14" height="14" viewBox="0 0 14 14"><g transform="translate(7,7)"><g fill="#3a3a3a"><rect x="-1.35" y="-7" width="2.7" height="4" transform="rotate(0)"/><rect x="-1.35" y="-7" width="2.7" height="4" transform="rotate(45)"/><rect x="-1.35" y="-7" width="2.7" height="4" transform="rotate(90)"/><rect x="-1.35" y="-7" width="2.7" height="4" transform="rotate(135)"/><rect x="-1.35" y="-7" width="2.7" height="4" transform="rotate(180)"/><rect x="-1.35" y="-7" width="2.7" height="4" transform="rotate(225)"/><rect x="-1.35" y="-7" width="2.7" height="4" transform="rotate(270)"/><rect x="-1.35" y="-7" width="2.7" height="4" transform="rotate(315)"/><circle r="5.1"/></g>
<rect x="-4.1" y="-2.6" width="8.2" height="5.2" rx="1.4" fill="#fff"/>
<g fill="none" stroke="#4d94dc" stroke-width=".85"><ellipse cx="-2.35" cy="0" rx=".85" ry="1.55"/><path d="M-.1,-1.7 V1.7"/><path d="M1.5,-1.7 V.7 Q1.5,1.6 2.3,1.6 Q3.1,1.6 3.1,.7 V-1.7"/></g></g></svg><div class="t" style="left:119.2px;top:301px;line-height:20px;height:20px;color:#000;transform:scaleX(0.9817)">XlFixedFormatQuality</div><svg style="position:absolute;left:99px;top:323px" width="14" height="14" viewBox="0 0 14 14"><g transform="translate(7,7)"><g fill="#3a3a3a"><rect x="-1.35" y="-7" width="2.7" height="4" transform="rotate(0)"/><rect x="-1.35" y="-7" width="2.7" height="4" transform="rotate(45)"/><rect x="-1.35" y="-7" width="2.7" height="4" transform="rotate(90)"/><rect x="-1.35" y="-7" width="2.7" height="4" transform="rotate(135)"/><rect x="-1.35" y="-7" width="2.7" height="4" transform="rotate(180)"/><rect x="-1.35" y="-7" width="2.7" height="4" transform="rotate(225)"/><rect x="-1.35" y="-7" width="2.7" height="4" transform="rotate(270)"/><rect x="-1.35" y="-7" width="2.7" height="4" transform="rotate(315)"/><circle r="5.1"/></g>
<rect x="-4.1" y="-2.6" width="8.2" height="5.2" rx="1.4" fill="#fff"/>
<g fill="none" stroke="#4d94dc" stroke-width=".85"><ellipse cx="-2.35" cy="0" rx=".85" ry="1.55"/><path d="M-.1,-1.7 V1.7"/><path d="M1.5,-1.7 V.7 Q1.5,1.6 2.3,1.6 Q3.1,1.6 3.1,.7 V-1.7"/></g></g></svg><div class="t" style="left:119.2px;top:321px;line-height:20px;height:20px;color:#000;transform:scaleX(0.9778)">XlFixedFormatType</div><svg style="position:absolute;left:99px;top:343px" width="14" height="14" viewBox="0 0 14 14"><g transform="translate(7,7)"><g fill="#3a3a3a"><rect x="-1.35" y="-7" width="2.7" height="4" transform="rotate(0)"/><rect x="-1.35" y="-7" width="2.7" height="4" transform="rotate(45)"/><rect x="-1.35" y="-7" width="2.7" height="4" transform="rotate(90)"/><rect x="-1.35" y="-7" width="2.7" height="4" transform="rotate(135)"/><rect x="-1.35" y="-7" width="2.7" height="4" transform="rotate(180)"/><rect x="-1.35" y="-7" width="2.7" height="4" transform="rotate(225)"/><rect x="-1.35" y="-7" width="2.7" height="4" transform="rotate(270)"/><rect x="-1.35" y="-7" width="2.7" height="4" transform="rotate(315)"/><circle r="5.1"/></g>
<rect x="-4.1" y="-2.6" width="8.2" height="5.2" rx="1.4" fill="#fff"/>
<g fill="none" stroke="#4d94dc" stroke-width=".85"><ellipse cx="-2.35" cy="0" rx=".85" ry="1.55"/><path d="M-.1,-1.7 V1.7"/><path d="M1.5,-1.7 V.7 Q1.5,1.6 2.3,1.6 Q3.1,1.6 3.1,.7 V-1.7"/></g></g></svg><div class="t" style="left:119.2px;top:341px;line-height:20px;height:20px;color:#000;transform:scaleX(1.0170)">XlForecastAggregation</div><svg style="position:absolute;left:99px;top:363px" width="14" height="14" viewBox="0 0 14 14"><g transform="translate(7,7)"><g fill="#3a3a3a"><rect x="-1.35" y="-7" width="2.7" height="4" transform="rotate(0)"/><rect x="-1.35" y="-7" width="2.7" height="4" transform="rotate(45)"/><rect x="-1.35" y="-7" width="2.7" height="4" transform="rotate(90)"/><rect x="-1.35" y="-7" width="2.7" height="4" transform="rotate(135)"/><rect x="-1.35" y="-7" width="2.7" height="4" transform="rotate(180)"/><rect x="-1.35" y="-7" width="2.7" height="4" transform="rotate(225)"/><rect x="-1.35" y="-7" width="2.7" height="4" transform="rotate(270)"/><rect x="-1.35" y="-7" width="2.7" height="4" transform="rotate(315)"/><circle r="5.1"/></g>
<rect x="-4.1" y="-2.6" width="8.2" height="5.2" rx="1.4" fill="#fff"/>
<g fill="none" stroke="#4d94dc" stroke-width=".85"><ellipse cx="-2.35" cy="0" rx=".85" ry="1.55"/><path d="M-.1,-1.7 V1.7"/><path d="M1.5,-1.7 V.7 Q1.5,1.6 2.3,1.6 Q3.1,1.6 3.1,.7 V-1.7"/></g></g></svg><div class="t" style="left:119.2px;top:361px;line-height:20px;height:20px;color:#000;transform:scaleX(0.9770)">XlForecastChartType</div><svg style="position:absolute;left:99px;top:383px" width="14" height="14" viewBox="0 0 14 14"><g transform="translate(7,7)"><g fill="#3a3a3a"><rect x="-1.35" y="-7" width="2.7" height="4" transform="rotate(0)"/><rect x="-1.35" y="-7" width="2.7" height="4" transform="rotate(45)"/><rect x="-1.35" y="-7" width="2.7" height="4" transform="rotate(90)"/><rect x="-1.35" y="-7" width="2.7" height="4" transform="rotate(135)"/><rect x="-1.35" y="-7" width="2.7" height="4" transform="rotate(180)"/><rect x="-1.35" y="-7" width="2.7" height="4" transform="rotate(225)"/><rect x="-1.35" y="-7" width="2.7" height="4" transform="rotate(270)"/><rect x="-1.35" y="-7" width="2.7" height="4" transform="rotate(315)"/><circle r="5.1"/></g>
<rect x="-4.1" y="-2.6" width="8.2" height="5.2" rx="1.4" fill="#fff"/>
<g fill="none" stroke="#4d94dc" stroke-width=".85"><ellipse cx="-2.35" cy="0" rx=".85" ry="1.55"/><path d="M-.1,-1.7 V1.7"/><path d="M1.5,-1.7 V.7 Q1.5,1.6 2.3,1.6 Q3.1,1.6 3.1,.7 V-1.7"/></g></g></svg><div class="t" style="left:119.2px;top:381px;line-height:20px;height:20px;color:#000;transform:scaleX(0.9700)">XlFormatConditionOperator</div></div>
<div style="position:absolute;left:260px;top:102px;width:15px;height:384px;background:#f0f0f0"></div>
<div style="position:absolute;left:260px;top:226px;width:15px;height:22px;background:#cdcdcd"></div>
<div style="position:absolute;left:10px;top:486px;width:265px;height:15px;background:#f0f0f0"></div>
<div style="position:absolute;left:26px;top:486px;width:136px;height:15px;background:#cdcdcd"></div>
<div style="position:absolute;left:277px;top:100px;width:1px;height:403px;background:#f5f4f2"></div>
<div style="position:absolute;left:280px;top:100px;width:435px;height:403px;background:#fff"></div>
<div style="position:absolute;left:280px;top:100px;width:435px;height:1px;background:#6e6e6e"></div>
<div style="position:absolute;left:280px;top:100px;width:1px;height:403px;background:#6e6e6e"></div>
<div style="position:absolute;left:281px;top:502px;width:434px;height:1px;background:#6a6a6a"></div>
<div style="position:absolute;left:480px;top:101px;width:1px;height:24px;background:#e5e5e5"></div>
<div style="position:absolute;left:540px;top:101px;width:1px;height:24px;background:#e5e5e5"></div>
<div class="t" style="left:287px;top:104px;line-height:20px;height:20px;color:#000;transform:scaleX(0.9917);">Name</div>
<div class="t" style="left:487px;top:104px;line-height:20px;height:20px;color:#000;transform:scaleX(0.9537);">Value</div>
<div class="t" style="left:547px;top:104px;line-height:20px;height:20px;color:#000;transform:scaleX(0.9944);">Help</div>
<div class="t" style="left:286.5px;top:127px;line-height:20px;height:20px;color:#000;transform:scaleX(0.9867);">xlAddIn</div>
<div class="t" style="left:486.7px;top:127px;line-height:20px;height:20px;color:#000;transform:scaleX(0.9300);">18</div>
<div class="t" style="left:286.5px;top:148px;line-height:20px;height:20px;color:#000;transform:scaleX(0.8803);">xlCSV</div>
<div class="t" style="left:486.7px;top:148px;line-height:20px;height:20px;color:#000;transform:scaleX(0.9300);">6</div>
<div class="t" style="left:286.5px;top:169px;line-height:20px;height:20px;color:#000;transform:scaleX(0.9475);">xlCSVMac</div>
<div class="t" style="left:486.7px;top:169px;line-height:20px;height:20px;color:#000;transform:scaleX(0.9300);">22</div>
<div class="t" style="left:286.5px;top:190px;line-height:20px;height:20px;color:#000;transform:scaleX(0.9177);">xlCSVMSDOS</div>
<div class="t" style="left:486.7px;top:190px;line-height:20px;height:20px;color:#000;transform:scaleX(0.9300);">24</div>
<div class="t" style="left:286.5px;top:211px;line-height:20px;height:20px;color:#000;transform:scaleX(0.9599);">xlCSVWindows</div>
<div class="t" style="left:486.7px;top:211px;line-height:20px;height:20px;color:#000;transform:scaleX(0.9300);">23</div>
<div class="t" style="left:286.5px;top:232px;line-height:20px;height:20px;color:#000;transform:scaleX(0.8868);">xlDBF2</div>
<div class="t" style="left:486.7px;top:232px;line-height:20px;height:20px;color:#000;transform:scaleX(0.9300);">7</div>
<div class="t" style="left:286.5px;top:253px;line-height:20px;height:20px;color:#000;transform:scaleX(0.8868);">xlDBF3</div>
<div class="t" style="left:486.7px;top:253px;line-height:20px;height:20px;color:#000;transform:scaleX(0.9300);">8</div>
<div class="t" style="left:286.5px;top:274px;line-height:20px;height:20px;color:#000;transform:scaleX(0.8962);">xlDBF4</div>
<div class="t" style="left:486.7px;top:274px;line-height:20px;height:20px;color:#000;transform:scaleX(0.9300);">11</div>
<div class="t" style="left:286.5px;top:295px;line-height:20px;height:20px;color:#000;transform:scaleX(0.9162);">xlDIF</div>
<div class="t" style="left:486.7px;top:295px;line-height:20px;height:20px;color:#000;transform:scaleX(0.9300);">9</div>
<div class="t" style="left:286.5px;top:316px;line-height:20px;height:20px;color:#000;transform:scaleX(0.9335);">xlExcel2</div>
<div class="t" style="left:486.7px;top:316px;line-height:20px;height:20px;color:#000;transform:scaleX(0.9300);">16</div>
<div class="t" style="left:286.5px;top:337px;line-height:20px;height:20px;color:#000;transform:scaleX(0.9295);">xlExcel2FarEast</div>
<div class="t" style="left:486.7px;top:337px;line-height:20px;height:20px;color:#000;transform:scaleX(0.9300);">27</div>
<div class="t" style="left:286.5px;top:358px;line-height:20px;height:20px;color:#000;transform:scaleX(0.9335);">xlExcel3</div>
<div class="t" style="left:486.7px;top:358px;line-height:20px;height:20px;color:#000;transform:scaleX(0.9300);">29</div>
<div class="t" style="left:286.5px;top:379px;line-height:20px;height:20px;color:#000;transform:scaleX(0.9335);">xlExcel4</div>
<div class="t" style="left:486.7px;top:379px;line-height:20px;height:20px;color:#000;transform:scaleX(0.9300);">33</div>
<div class="t" style="left:286.5px;top:400px;line-height:20px;height:20px;color:#000;transform:scaleX(0.9335);">xlExcel5</div>
<div class="t" style="left:486.7px;top:400px;line-height:20px;height:20px;color:#000;transform:scaleX(0.9300);">39</div>
<div class="t" style="left:286.5px;top:421px;line-height:20px;height:20px;color:#000;transform:scaleX(0.9335);">xlExcel7</div>
<div class="t" style="left:486.7px;top:421px;line-height:20px;height:20px;color:#000;transform:scaleX(0.9300);">39</div>
<div class="t" style="left:286.5px;top:442px;line-height:20px;height:20px;color:#000;transform:scaleX(0.9400);">xlExcel9795</div>
<div class="t" style="left:486.7px;top:442px;line-height:20px;height:20px;color:#000;transform:scaleX(0.9300);">43</div>
<div class="t" style="left:286.5px;top:463px;line-height:20px;height:20px;color:#000;transform:scaleX(0.9934);">xlExcel4Workbook</div>
<div class="t" style="left:486.7px;top:463px;line-height:20px;height:20px;color:#000;transform:scaleX(0.9300);">35</div>
<div style="position:absolute;left:698px;top:101px;width:17px;height:385px;background:#f0f0f0"></div>
<div style="position:absolute;left:698px;top:118px;width:15px;height:106px;background:#cdcdcd"></div>
<div style="position:absolute;left:281px;top:486px;width:434px;height:16px;background:#f0f0f0"></div>
<div style="position:absolute;left:298px;top:486px;width:347px;height:15px;background:#cdcdcd"></div>
<svg style="position:absolute;left:0px;top:0px" width="723" height="534" viewBox="0 0 723 534" ><polygon points="264.0,113.0 264.0,110.5 267.5,106.9 271.0,110.5 271.0,113.0 267.5,109.7" fill="#505050"/><polygon points="264.0,474.0 264.0,476.5 267.5,480.1 271.0,476.5 271.0,474.0 267.5,477.3" fill="#505050"/><polygon points="20.0,490.0 17.5,490.0 13.9,493.5 17.5,497.0 20.0,497.0 16.7,493.5" fill="#505050"/><polygon points="248.0,490.0 250.5,490.0 254.1,493.5 250.5,497.0 248.0,497.0 251.3,493.5" fill="#505050"/><polygon points="702.0,113.0 702.0,110.5 705.5,106.9 709.0,110.5 709.0,113.0 705.5,109.7" fill="#505050"/><polygon points="702.0,474.0 702.0,476.5 705.5,480.1 709.0,476.5 709.0,474.0 705.5,477.3" fill="#505050"/><polygon points="292.0,490.0 289.5,490.0 285.9,493.5 289.5,497.0 292.0,497.0 288.7,493.5" fill="#505050"/><polygon points="686.0,490.0 688.5,490.0 692.1,493.5 688.5,497.0 686.0,497.0 689.3,493.5" fill="#505050"/></svg>
<div style="position:absolute;left:8px;top:503px;width:707px;height:23px;background:#f0f0f0"></div>
<div style="position:absolute;left:257px;top:505px;width:1px;height:20px;background:#d7d7d7"></div>
<div style="position:absolute;left:8px;top:525px;width:707px;height:1px;background:#fbfbfb"></div>
<div style="position:absolute;left:714px;top:503px;width:1px;height:23px;background:#fafafa"></div>
<div class="t" style="left:10px;top:506px;line-height:20px;height:20px;color:#000;transform:scaleX(0.8924);">0 object(s). 251.1Mb free.</div>
<div class="t" style="left:262.5px;top:506px;line-height:20px;height:20px;color:#000;transform:scaleX(0.8814);">0 bytes used (0 bytes selected)</div>
<svg style="position:absolute;left:0px;top:0px" width="723" height="534" viewBox="0 0 723 534" shape-rendering="crispEdges"><rect x="711" y="516" width="2" height="2" fill="#b8b8b8"/><rect x="708" y="519" width="2" height="2" fill="#b8b8b8"/><rect x="711" y="519" width="2" height="2" fill="#b8b8b8"/><rect x="705" y="522" width="2" height="2" fill="#b8b8b8"/><rect x="708" y="522" width="2" height="2" fill="#b8b8b8"/><rect x="711" y="522" width="2" height="2" fill="#b8b8b8"/></svg>
</body></html>
